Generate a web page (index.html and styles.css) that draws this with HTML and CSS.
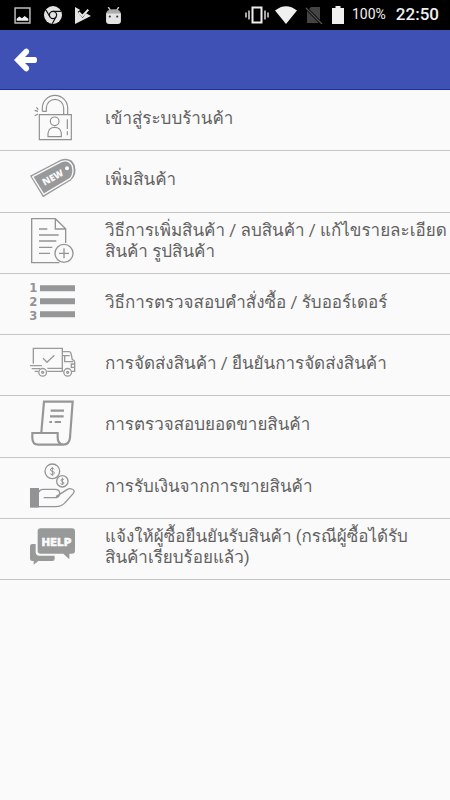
FILE: index.html
```html
<!DOCTYPE html>
<html lang="th">
<head>
<meta charset="utf-8">
<meta name="viewport" content="width=device-width, initial-scale=1">
<title>ร้านค้า</title>
<link rel="stylesheet" href="styles.css">
</head>
<body>
<div class="status">
  <div class="status-left">
    <svg class="sicon" viewBox="0 0 16 16"><path d="M1 1h14v14H1z" fill="none" stroke="#bdbdbd" stroke-width="1.4"/><path d="M2.500 13v-2l2.500-2 2.500 1.500 2.500-2 3.500 2.500v2z" fill="#f0f0f0"/></svg>
    <svg class="chrome" viewBox="0 0 18 18"><circle cx="9" cy="9" r="9" fill="#e4e4e4"/><circle cx="9" cy="9" r="3.600" fill="none" stroke="#111" stroke-width="1.200"/><path d="M9 5.400h8M5.900 10.800L1.900 4M12.100 10.800L8.200 17.700" stroke="#111" stroke-width="1.200"/></svg>
    <svg class="sicon" viewBox="0 0 16 16"><path d="M0 0L15 8.500 0 16z" fill="#e4e4e4"/><path d="M4 3.500l3 3.500L12 0" fill="none" stroke="#000" stroke-width="4"/><path d="M3.500 5l3.500 3.500L12.500 2.500" fill="none" stroke="#e4e4e4" stroke-width="2"/></svg>
    <svg class="sicon" viewBox="0 0 16 16"><path d="M3 0l2 3M13 0l-2 3" stroke="#c8c8c8" stroke-width="1.300"/><path d="M1 6.500Q1 2 8 2t7 4.500z" fill="#aaa"/><path d="M1 6h14v7q0 3-3 3H4q-3 0-3-3z" fill="#e4e4e4"/><circle cx="4.500" cy="9" r="1" fill="#333"/><circle cx="11.500" cy="9" r="1" fill="#333"/></svg>
  </div>
  <div class="status-right">
    <svg class="vibrate" viewBox="0 0 24 18"><path d="M7.500 1.500h9v15h-9z" fill="none" stroke="#eee" stroke-width="2"/><path d="M4 4.500v9M20 4.500v9M1 6.500v5M23 6.500v5" stroke="#ddd" stroke-width="1.500"/></svg>
    <svg class="wifi" viewBox="0 0 22 18"><path d="M0 4.500Q11-4 22 4.500L11 18z" fill="#f0f0f0"/></svg>
    <svg class="sim" viewBox="0 0 18 18"><path d="M6 1h9v16H2V5z" fill="#444"/><path d="M0 1l17 17" stroke="#000" stroke-width="3"/><path d="M1 2l16 16" stroke="#555" stroke-width="1.300"/></svg>
    <svg class="battery" viewBox="0 0 12 18"><path d="M0 2h3.500V0h5v2H12v16H0z" fill="#f0f0f0"/></svg>
    <span class="percent">100%</span>
    <span class="clock">22:50</span>
  </div>
</div>
<header class="bar">
  <button class="back" type="button" aria-label="ย้อนกลับ">
    <svg viewBox="0 0 26 26"><path d="M2 13L12.500 2.300q2-1.500 3.800.3t.3 3.800L13 10h10q2 0 2 3t-2 3H13l3.600 3.600q1.500 2-.3 3.800t-3.800.3z" fill="#fff"/></svg>
  </button>
</header>
<main>
<ul class="menu">
  <li><a href="#login">
    <svg class="icon" viewBox="27 18 144 144"><g fill="none" stroke="#8f9091" stroke-width="3.500"><path d="M58 74h96v75H58zM67 64V54a38 38 0 0 1 76 0v20M79 65V54a26 26 0 0 1 52 0v20M67 64h12M44 61l10 3M49 52l6 7M44 77l10-5"/><circle cx="104" cy="94" r="13"/><path d="M84 140v-10q2-18 20-18t20 18v10zM142 88v29M142 124v12"/></g></svg>
    <span class="label">เข้าสู่ระบบร้านค้า</span></a></li>
  <li><a href="#add">
    <svg class="icon" viewBox="27 16 144 144"><path d="M30 72L122 24Q151 14 164 40Q172 70 153 86L69 137z" fill="#98999b"/><path d="M38 75L124 30Q147 22 157 43Q163 68 150 81L71 128z" fill="none" stroke="#fafafa" stroke-width="4"/><circle cx="141" cy="50" r="6" fill="#fafafa"/><text class="tag-text" x="99" y="87" transform="rotate(-29 99 78)">NEW</text></svg>
    <span class="label">เพิ่มสินค้า</span></a></li>
  <li><a href="#how-add">
    <svg class="icon" viewBox="27 19 144 144"><g fill="none" stroke="#939495" stroke-width="4"><path d="M137 91V48L106 18H35v132h83M106 18v31h31M57 49h25M57 67h59M57 85h52M57 104h40M57 122h33"/><circle cx="132" cy="122" r="27"/><path d="M117 122h30M132 107v30"/></g></svg>
    <span class="label">วิธีการเพิ่มสินค้า / ลบสินค้า / แก้ไขรายละเอียด<br>สินค้า รูปสินค้า</span></a></li>
  <li><a href="#orders">
    <svg class="icon" viewBox="27 23 144 144"><path d="M60 39h105v18H60zM60 78h105v18H60zM60 117h105v18H60z" fill="#959697"/><g class="list-num"><text x="40" y="58">1</text><text x="40" y="101">2</text><text x="40" y="144">3</text></g></svg>
    <span class="label">วิธีการตรวจสอบคำสั่งซื้อ / รับออร์เดอร์</span></a></li>
  <li><a href="#shipping">
    <svg class="icon" viewBox="27 21 144 144"><g fill="none" stroke="#999a9b" stroke-width="4"><path d="M40 89V43h87v69H82M127 53h20q4 0 6 5l4 19q7 2 7 9v26h-8M127 65h22M134 65v18h25M164 90h-10v10h10M30 95h36M35 104h25M44 112h11M82 103h45M127 112h3M69 73l12 12 22-21"/><circle cx="68" cy="115" r="11.500"/><circle cx="143" cy="115" r="11.500"/><circle cx="68" cy="115" r="3"/><circle cx="143" cy="115" r="3"/></g></svg>
    <span class="label">การจัดส่งสินค้า / ยืนยันการจัดส่งสินค้า</span></a></li>
  <li><a href="#sales">
    <svg class="icon" viewBox="27 22 144 144"><g fill="none" stroke="#959697" stroke-width="6.500"><path d="M64 113L72 21h86l-8 108q-2 21-20 21H55q-18 0-18-20v-15h76v13q0 21 17 22"/><path d="M92 48h40M90 65h41M88 82h8M104 82h19"/></g></svg>
    <span class="label">การตรวจสอบยอดขายสินค้า</span></a></li>
  <li><a href="#payment">
    <svg class="icon" viewBox="27 22 144 144"><path d="M30 94h27v59H30z" fill="#929394"/><g fill="none" stroke="#949596" stroke-width="4"><path d="M57 106q2-8 12-8h36q14 0 14 11 0 14-16 14H71M119 113q-2 8-9 10M108 120l33-21q8-5 15-2 10 4 4 13l-24 27q-10 12-29 13H57"/><circle cx="97" cy="44" r="22"/><circle cx="127" cy="74" r="17"/></g><path d="M103 38q-3-4-7-3-5 1-5 5 1 3 6 4 6 1 6 5-1 5-6 5-5 0-7-4M97 31v27M132 70q-2-3-5-3-4 1-4 4t4 4 5 4-5 4q-4 0-5-3M127 63v22" fill="none" stroke="#949596" stroke-width="3"/></svg>
    <span class="label">การรับเงินจากการขายสินค้า</span></a></li>
  <li><a href="#confirm">
    <svg class="icon" viewBox="27 23 144 144"><path d="M62 33h94q9 0 9 9v58q0 9-9 9h-8v17l-18-17H62q-9 0-9-9V42q0-9 9-9z" fill="#989999"/><path d="M47 80v24q0 11 11 11h46v9q0 7-7 7H55l-14 11v-11h-4q-7 0-7-7V87q0-7 7-7z" fill="#989999"/><text class="help-text" x="109" y="85">HELP</text></svg>
    <span class="label">แจ้งให้ผู้ซื้อยืนยันรับสินค้า (กรณีผู้ซื้อได้รับ<br>สินค้าเรียบร้อยแล้ว)</span></a></li>
</ul>
</main>
</body>
</html>
```
FILE: styles.css
```css
* { box-sizing: border-box; }
body {
  margin: 0;
  min-height: 100vh;
  background: #fafafa;
  color: #616161;
  font-family: Roboto, Loma, "Noto Sans Thai Looped", sans-serif;
}
.status {
  height: 30px;
  padding: 0 11px 0 14px;
  display: flex;
  align-items: center;
  justify-content: space-between;
  background: #000;
  color: #f0f0f0;
}
.status-left, .status-right { display: flex; align-items: center; }
.status-left { gap: 13px; }
.sicon { width: 17px; height: 17px; }
.chrome { width: 18px; height: 18px; }
.vibrate { width: 24px; height: 18px; margin-right: 6px; }
.wifi { width: 22px; height: 18px; margin-right: 8px; }
.sim { width: 18px; height: 18px; margin-right: 9px; }
.battery { width: 12px; height: 18px; margin-right: 8px; }
.percent { font-size: 14px; line-height: 24px; margin-right: 10px; padding-bottom: 2px; }
.clock { font-size: 17px; line-height: 24px; font-weight: 500; padding-bottom: 2px; }
.bar {
  height: 60px;
  padding: 0 12px;
  display: flex;
  align-items: center;
  background: #3f51b5;
  border-bottom: 1px solid #1a2fa0;
}
.back {
  display: block;
  padding: 0;
  border: 0;
  background: none;
  line-height: 0;
}
.back svg { width: 26px; height: 26px; }
.menu {
  margin: 0;
  padding: 0;
  list-style: none;
  display: grid;
  grid-auto-rows: 1fr;
  min-height: 490px;
}
.menu li { display: flex; border-bottom: 1px solid #c4c4c4; }
.menu a {
  flex: 1;
  display: flex;
  align-items: center;
  gap: 28px;
  padding-left: 29px;
  color: inherit;
  text-decoration: none;
}
.icon { flex: none; width: 48px; height: 48px; overflow: visible; }
.label {
  padding-bottom: 3px;
  font-size: 17px;
  line-height: 21px;
  white-space: nowrap;
}
.icon text { text-anchor: middle; font-family: "DejaVu Sans", sans-serif; font-weight: 700; }
.icon .tag-text { fill: #fafafa; font-family: "Open Sans", sans-serif; font-weight: 800; font-size: 28px; }
.list-num { fill: #929394; font-size: 35px; }
.icon .help-text { fill: #fafafa; stroke: #fafafa; stroke-width: 2px; font-size: 31px; }
```
